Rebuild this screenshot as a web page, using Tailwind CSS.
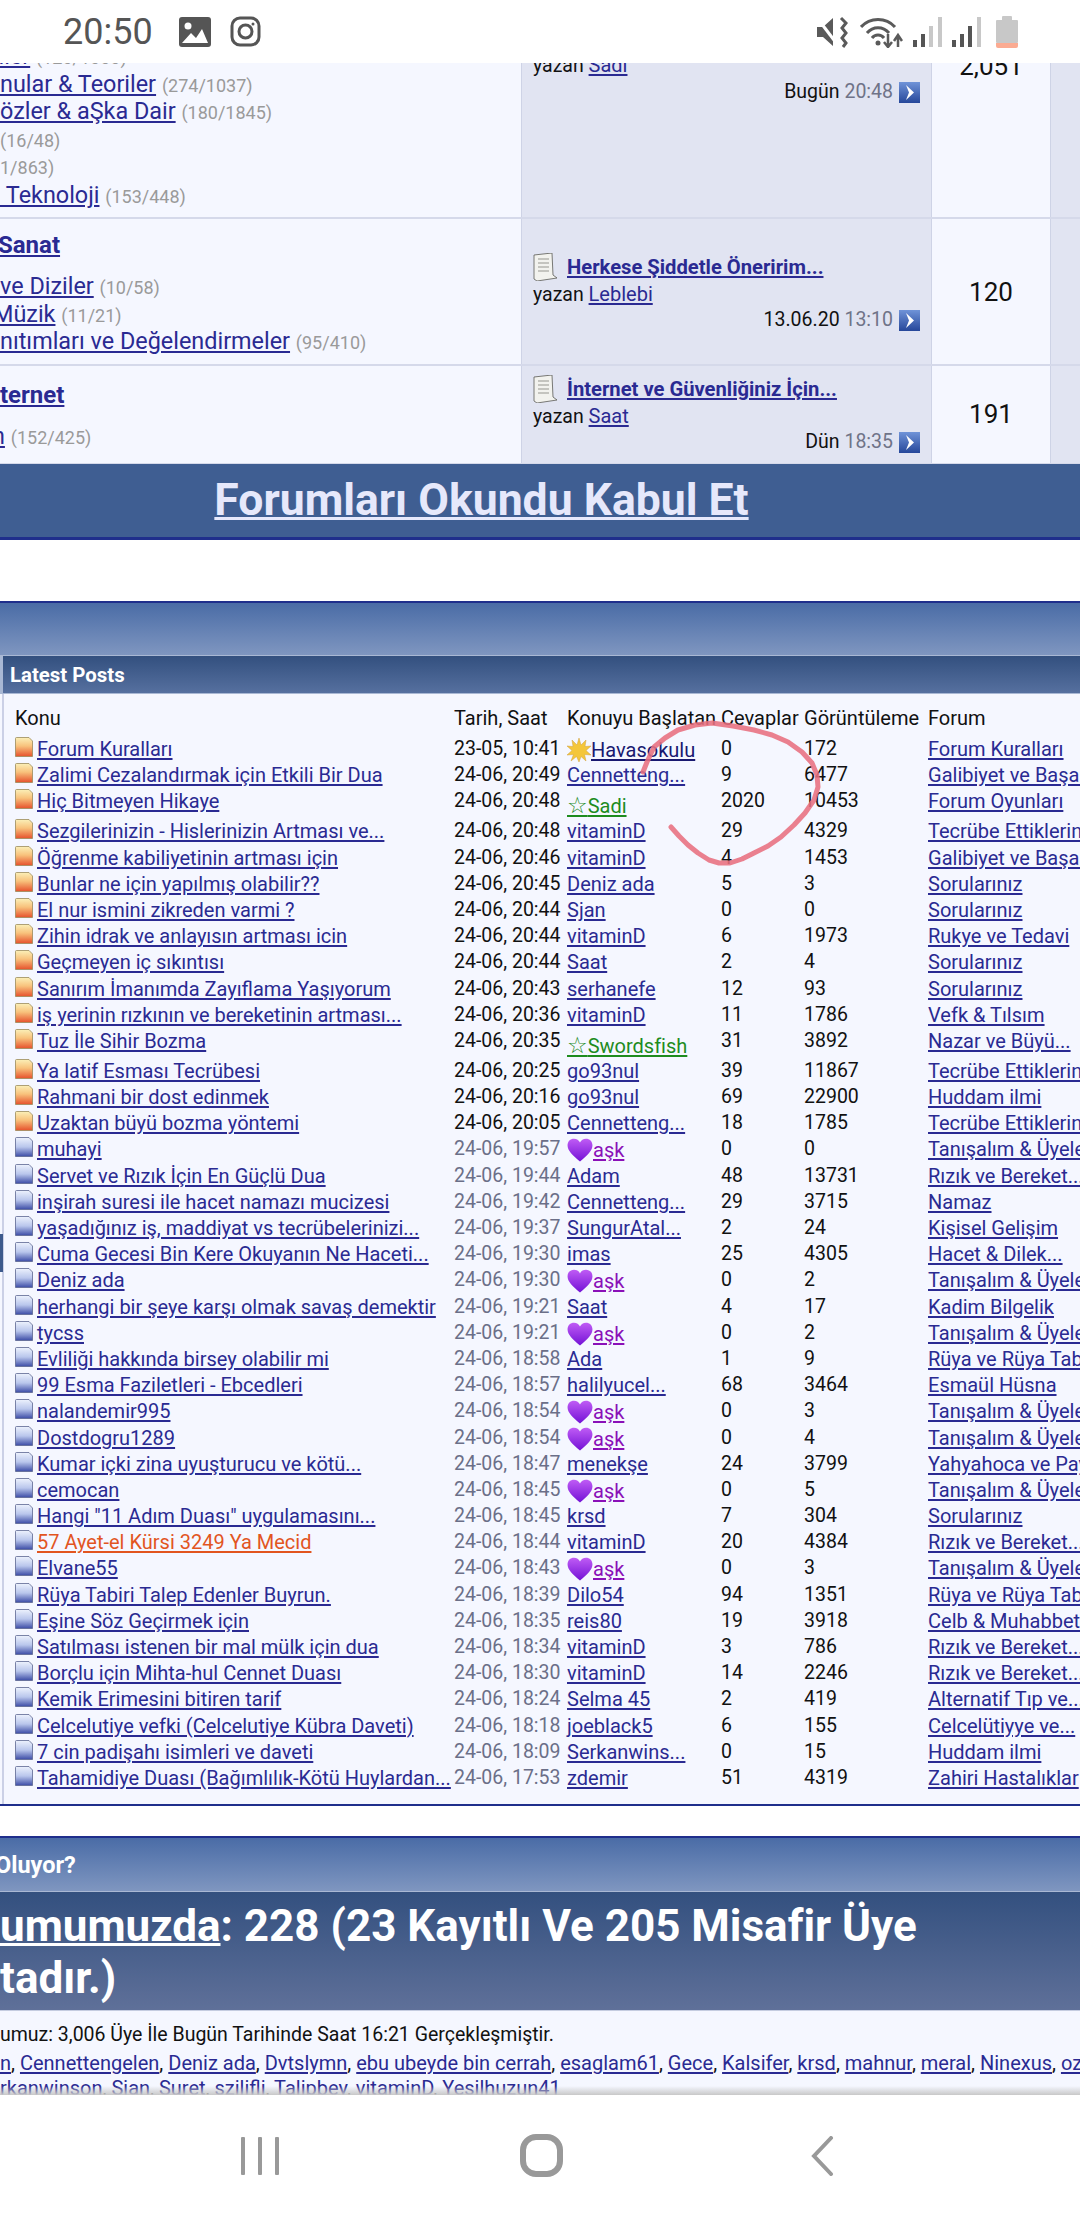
<!DOCTYPE html>
<html lang="tr">
<head>
<meta charset="utf-8">
<title>Forum</title>
<script src="https://cdn.jsdelivr.net/npm/@tailwindcss/browser@4"></script>
</head>
<body class="m-0 bg-white">
<svg class="absolute w-0 h-0" aria-hidden="true">
<defs>
<linearGradient id="go" x1="0" y1="0" x2="0" y2="1"><stop offset="0" stop-color="#fbf0b8"/><stop offset=".45" stop-color="#f8c27c"/><stop offset="1" stop-color="#e6512c"/></linearGradient>
<linearGradient id="gb" x1="0" y1="0" x2="0" y2="1"><stop offset="0" stop-color="#edf2fd"/><stop offset=".5" stop-color="#b9c6ec"/><stop offset="1" stop-color="#3c4ca6"/></linearGradient>
<linearGradient id="gh" x1="0" y1="0" x2="0" y2="1"><stop offset="0" stop-color="#c05cf5"/><stop offset="1" stop-color="#7412d6"/></linearGradient>
<linearGradient id="ga" x1="0" y1="0" x2="0" y2="1"><stop offset="0" stop-color="#6f93d8"/><stop offset="1" stop-color="#26479a"/></linearGradient>
<symbol id="fo" viewBox="0 0 18 20"><path d="M.5 1.5Q.5.5 1.5.5H14L17.5 4V19.5H.5Z" fill="url(#go)" stroke="#9a8a5a" stroke-width=".8"/></symbol>
<symbol id="fb" viewBox="0 0 18 20"><path d="M.5 1.5Q.5.5 1.5.5H14L17.5 4V19.5H.5Z" fill="url(#gb)" stroke="#5c6690" stroke-width=".8"/></symbol>
<symbol id="he" viewBox="0 0 24 22"><path d="M12 21.5C5 15.500 .5 11.500 .5 6.500 .5 3 3 .5 6.500 .5 9 .5 11 1.800 12 4 13 1.800 15 .5 17.500 .5 21 .5 23.500 3 23.500 6.500 23.500 11.500 19 15.500 12 21.500Z" fill="url(#gh)"/></symbol>
<symbol id="st" viewBox="0 0 24 24"><path d="M12 0 14 7 19 2 18 8.500 24 8 19 12.500 24 17 17.500 16.500 19 23 14 18.500 12 24 9.500 18.500 4 23 6.500 16.500 0 17 5 12.500 0 8 6 8.500 5 2 10 7Z" fill="#f4c63a" stroke="#d0a040" stroke-width=".5"/></symbol>
<symbol id="ar" viewBox="0 0 21 21"><rect width="21" height="21" fill="url(#ga)"/><path d="M7 3 15 10.500 7 18 10 10.500Z" fill="#fff"/></symbol>
<symbol id="dc" viewBox="0 0 25 28"><path d="M1 2 19 0 20 22 24 25 4 28 1 26Z" fill="#f2f2ee" stroke="#5a5a55" stroke-width=".8"/><path d="M5 6H16M5 10H16M5 14H16M5 18H16" stroke="#b5b5b0" stroke-width="1.500"/></symbol>
</defs>
</svg>

<div class="relative w-[1080px] h-[2220px] overflow-hidden flex flex-col bg-white font-[Roboto,sans-serif] text-[19.5px] text-[#111]">

<!-- Status bar -->
<div class="h-[63px] shrink-0 bg-white flex items-center pl-[63px] pr-[62px] text-[#555] relative z-10">
  <span class="text-[36px] leading-none">20:50</span>
  <svg class="ml-[26px] w-[32px] h-[30px]" viewBox="0 0 32 30"><rect width="32" height="30" rx="3" fill="#555"/><circle cx="9" cy="9" r="3.500" fill="#fff"/><path d="M3 26 12 16 17 21 23 12 29 26Z" fill="#fff"/></svg>
  <svg class="ml-[19px] w-[31px] h-[31px]" viewBox="0 0 31 31" fill="none" stroke="#555" stroke-width="3"><rect x="2" y="2" width="27" height="27" rx="8"/><circle cx="15.500" cy="15.500" r="6.500"/><circle cx="23" cy="8" r="1.500" fill="#555" stroke="none"/></svg>
  <div class="ml-auto flex items-center">
    <svg class="w-[31px] h-[32px]" viewBox="0 0 31 32"><path d="M0 11H6L16 2V30L6 21H0Z" fill="#5a5a5a"/><path d="M1 3 20 28" stroke="#fff" stroke-width="3"/><path d="M24 2 29 7 25 12 29 17 25 22 29 27 26 31" fill="none" stroke="#5a5a5a" stroke-width="3"/></svg>
    <svg class="ml-[12px] w-[43px] h-[32px]" viewBox="0 0 43 32" fill="none" stroke="#5a5a5a" stroke-width="3"><path d="M1 11C10 1 26 1 35 11"/><path d="M7 17C13 10 23 10 29 17"/><path d="M12 22C15 18 21 18 24 22"/><circle cx="18" cy="27" r="2.500" fill="#5a5a5a" stroke="none"/><path d="M28 18V30M24 26 28 31 32 26M38 31V20M34 25 38 19 42 25" stroke-width="2.500"/></svg>
    <svg class="ml-[10px] w-[29px] h-[32px]" viewBox="0 0 29 32"><rect x="0" y="24" width="4" height="7" fill="#555"/><rect x="8" y="18" width="4" height="13" fill="#555"/><rect x="16" y="10" width="4" height="21" fill="#c8c8c8"/><rect x="25" y="1" width="4" height="30" fill="#c8c8c8"/></svg>
    <svg class="ml-[10px] w-[29px] h-[32px]" viewBox="0 0 29 32"><rect x="0" y="24" width="4" height="7" fill="#555"/><rect x="8" y="18" width="4" height="13" fill="#555"/><rect x="16" y="10" width="4" height="21" fill="#555"/><rect x="25" y="1" width="4" height="30" fill="#c8c8c8"/></svg>
    <svg class="ml-[15px] w-[22px] h-[32px]" viewBox="0 0 22 32"><rect x="6" y="0" width="10" height="5" rx="1" fill="#c8c8c8"/><rect x="0" y="4" width="22" height="23" rx="1" fill="#c8c8c8"/><path d="M0 27H22V30Q22 32 20 32H2Q0 32 0 30Z" fill="#fbab92"/></svg>
  </div>
</div>

<!-- Page viewport -->
<div class="h-[2033px] shrink-0 overflow-hidden relative [&_a]:underline [&_a]:underline-offset-2 [&_a]:text-[#2a2a92]">

  <!-- Forum rows -->
  <div class="h-[156px] grid grid-cols-[521px_411px_118px_1fr] border-b-2 border-[#d5d9ea] bg-[#f5f7ff] overflow-hidden">
    <div class="text-[23.4px] leading-[27.5px] whitespace-nowrap -mt-[20px] [&_span]:leading-none [&_a]:leading-none">
      <div class="-ml-[48px]"><a href="#">Teoriler</a> <span class="text-[18px] text-[#9a9a9a]">(120/1000)</span></div>
      <div><a href="#">nular &amp; Teoriler</a> <span class="text-[18px] text-[#9a9a9a]">(274/1037)</span></div>
      <div><a href="#">özler &amp; aŞka Dair</a> <span class="text-[18px] text-[#9a9a9a]">(180/1845)</span></div>
      <div class="pt-[1px] text-[18px] text-[#9a9a9a]">(16/48)</div>
      <div class="text-[18px] text-[#9a9a9a]">1/863)</div>
      <div><a href="#">&nbsp;Teknoloji</a> <span class="text-[18px] text-[#9a9a9a]">(153/448)</span></div>
    </div>
    <div class="bg-[#e1e4f2] border-x border-[#ced3e6] pl-[11px] pr-[11px] -mt-[11px] leading-[26px]">
      <div>yazan <a href="#" class="text-[20px]">Sadi</a></div>
      <div class="flex justify-end items-center"><span>Bugün</span>&nbsp;<span class="text-[#6f7388]">20:48</span><svg class="ml-[6px] w-[21px] h-[21px]"><use href="#ar"/></svg></div>
    </div>
    <div class="text-center text-[26px] leading-[30px] -mt-[12px]">2,051</div>
    <div class="bg-[#e1e4f2] border-l border-[#ced3e6] text-[26px] leading-[30px] pl-[24px] -mt-[12px]">1</div>
  </div>

  <div class="h-[147px] grid grid-cols-[521px_411px_118px_1fr] border-b-2 border-[#d5d9ea] bg-[#f5f7ff]">
    <div class="whitespace-nowrap pt-[13px] text-[23.4px] leading-[27.5px] [&_span]:leading-none [&_a]:leading-none">
      <div class="-ml-[2px] h-[41px]"><a href="#" class="text-[24px] font-bold">Sanat</a></div>
      <div><a href="#">ve Diziler</a> <span class="text-[18px] text-[#9a9a9a]">(10/58)</span></div>
      <div class="-ml-[7px]"><a href="#">Müzik</a> <span class="text-[18px] text-[#9a9a9a]">(11/21)</span></div>
      <div><a href="#">nıtımları ve Değelendirmeler</a> <span class="text-[18px] text-[#9a9a9a]">(95/410)</span></div>
    </div>
    <div class="bg-[#e1e4f2] border-x border-[#ced3e6] pl-[11px] pr-[11px] pt-[34px] leading-[26px]">
      <div class="flex items-center h-[28px]"><svg class="w-[25px] h-[28px] mr-[9px]"><use href="#dc"/></svg><a href="#" class="font-bold text-[20.2px]">Herkese Şiddetle Öneririm...</a></div>
      <div>yazan <a href="#" class="text-[20px]">Leblebi</a></div>
      <div class="flex justify-end items-center -mt-[1px]"><span>13.06.20</span>&nbsp;<span class="text-[#6f7388]">13:10</span><svg class="ml-[6px] w-[21px] h-[21px]"><use href="#ar"/></svg></div>
    </div>
    <div class="flex items-center justify-center text-[26px] pt-[1px]">120</div>
    <div class="bg-[#e1e4f2] border-l border-[#ced3e6]"></div>
  </div>

  <div class="h-[97px] grid grid-cols-[521px_411px_118px_1fr] bg-[#f5f7ff]">
    <div class="whitespace-nowrap pt-[16px] text-[23.4px] leading-[27.5px] [&_span]:leading-none [&_a]:leading-none">
      <div class="h-[41px]"><a href="#" class="text-[24px] font-bold">ternet</a></div>
      <div class="-ml-[8px]"><a href="#">n</a> <span class="text-[18px] text-[#9a9a9a]">(152/425)</span></div>
    </div>
    <div class="bg-[#e1e4f2] border-x border-[#ced3e6] pl-[11px] pr-[11px] pt-[9px] leading-[26px]">
      <div class="flex items-center h-[28px]"><svg class="w-[25px] h-[28px] mr-[9px]"><use href="#dc"/></svg><a href="#" class="font-bold text-[20.2px]">İnternet ve Güvenliğiniz İçin...</a></div>
      <div>yazan <a href="#" class="text-[20px]">Saat</a></div>
      <div class="flex justify-end items-center -mt-[1px]"><span>Dün</span>&nbsp;<span class="text-[#6f7388]">18:35</span><svg class="ml-[6px] w-[21px] h-[21px]"><use href="#ar"/></svg></div>
    </div>
    <div class="flex items-center justify-center text-[26px]">191</div>
    <div class="bg-[#e1e4f2] border-l border-[#ced3e6]"></div>
  </div>

  <!-- Blue banner -->
  <div class="h-[77px] bg-[#3f5e92] border-t border-[#d5d9ea] border-b-[3px] border-b-[#1f2f8c] flex justify-center items-start pt-[7px] pr-[117px] whitespace-nowrap">
    <a href="#" class="text-[44.5px] leading-[58px] font-bold !text-[#e6e8fb] decoration-[3px]">Forumları Okundu Kabul Et</a>
  </div>

  <div class="h-[61px] bg-white"></div>

  <!-- Latest posts -->
  <div class="h-[55px] border-t-[2px] border-[#1f2f8c] bg-linear-to-b from-[#4a6ca6] to-[#7f96c0] border-b border-b-[#a9b8d4]"></div>
  <div class="h-[38px] bg-linear-to-b from-[#33507f] to-[#56709f] border-l-[3px] border-[#a9b8d4] border-b border-b-[#a9b8d4] pl-[7px] pt-[2px] flex items-center font-bold text-white text-[20.4px]">Latest Posts</div>
  <div class="relative bg-[#f5f7ff] h-[1112px] border-b-[2px] border-[#1f2f8c] overflow-hidden pl-[15px] pt-[10px]">
    <div class="absolute left-[2px] top-0 bottom-0 w-[2px] bg-[#cbd0e6]"></div>
    <div class="absolute left-0 top-[540px] h-[38px] w-[3px] bg-[#3d5a8c]"></div>
    <table class="table-fixed w-[1113px] border-collapse [&_td]:px-0 [&_td]:pb-0 [&_td]:pt-[2px] [&_td]:align-top [&_td]:whitespace-nowrap [&_td]:leading-[22px] [&_td>svg]:block [&_td>svg]:w-[18px] [&_td>svg]:h-[20px] [&_td>svg]:mt-[-1px] [&_a>svg]:inline-block [&_a>svg]:align-[-5px] [&_a]:text-[20px]">
      <colgroup><col class="w-[22px]"><col class="w-[417px]"><col class="w-[113px]"><col class="w-[154px]"><col class="w-[83px]"><col class="w-[124px]"><col class="w-[200px]"></colgroup>
      <tbody>
      <tr class="h-[32px] text-[20px] [&>td]:!pt-[3px]"><td colspan="2">Konu</td><td>Tarih, Saat</td><td>Konuyu Başlatan</td><td>Cevaplar</td><td>Görüntüleme</td><td>Forum</td></tr>
      <tr class="h-[26.2px]"><td><svg><use href="#fo"/></svg></td><td><a href="#">Forum Kuralları</a></td><td>23-05, 10:41</td><td><a href="#" class="!text-[#191970]"><svg class="w-[24px] h-[24px]"><use href="#st"/></svg>Havasokulu</a></td><td>0</td><td>172</td><td><a href="#">Forum Kuralları</a></td></tr>
      <tr class="h-[26.2px]"><td><svg><use href="#fo"/></svg></td><td><a href="#">Zalimi Cezalandırmak için Etkili Bir Dua</a></td><td>24-06, 20:49</td><td><a href="#">Cennetteng...</a></td><td>9</td><td>6477</td><td><a href="#">Galibiyet ve Başarı</a></td></tr>
      <tr class="h-[30px]"><td><svg><use href="#fo"/></svg></td><td><a href="#">Hiç Bitmeyen Hikaye</a></td><td>24-06, 20:48</td><td class="!pt-[6px]"><a href="#" class="!text-[#1e8c1e]"><span class="font-['DejaVu_Sans'] text-[23px] leading-none">☆</span>Sadi</a></td><td>2020</td><td>10453</td><td><a href="#">Forum Oyunları</a></td></tr>
      <tr class="h-[26.2px]"><td><svg><use href="#fo"/></svg></td><td><a href="#">Sezgilerinizin - Hislerinizin Artması ve...</a></td><td>24-06, 20:48</td><td><a href="#">vitaminD</a></td><td>29</td><td>4329</td><td><a href="#">Tecrübe Ettiklerin</a></td></tr>
      <tr class="h-[26.2px]"><td><svg><use href="#fo"/></svg></td><td><a href="#">Öğrenme kabiliyetinin artması için</a></td><td>24-06, 20:46</td><td><a href="#">vitaminD</a></td><td>4</td><td>1453</td><td><a href="#">Galibiyet ve Başarı</a></td></tr>
      <tr class="h-[26.2px]"><td><svg><use href="#fo"/></svg></td><td><a href="#">Bunlar ne için yapılmış olabilir??</a></td><td>24-06, 20:45</td><td><a href="#">Deniz ada</a></td><td>5</td><td>3</td><td><a href="#">Sorularınız</a></td></tr>
      <tr class="h-[26.2px]"><td><svg><use href="#fo"/></svg></td><td><a href="#">El nur ismini zikreden varmi ?</a></td><td>24-06, 20:44</td><td><a href="#">Sjan</a></td><td>0</td><td>0</td><td><a href="#">Sorularınız</a></td></tr>
      <tr class="h-[26.2px]"><td><svg><use href="#fo"/></svg></td><td><a href="#">Zihin idrak ve anlayısın artması icin</a></td><td>24-06, 20:44</td><td><a href="#">vitaminD</a></td><td>6</td><td>1973</td><td><a href="#">Rukye ve Tedavi</a></td></tr>
      <tr class="h-[26.2px]"><td><svg><use href="#fo"/></svg></td><td><a href="#">Geçmeyen iç sıkıntısı</a></td><td>24-06, 20:44</td><td><a href="#">Saat</a></td><td>2</td><td>4</td><td><a href="#">Sorularınız</a></td></tr>
      <tr class="h-[26.2px]"><td><svg><use href="#fo"/></svg></td><td><a href="#">Sanırım İmanımda Zayıflama Yaşıyorum</a></td><td>24-06, 20:43</td><td><a href="#">serhanefe</a></td><td>12</td><td>93</td><td><a href="#">Sorularınız</a></td></tr>
      <tr class="h-[26.2px]"><td><svg><use href="#fo"/></svg></td><td><a href="#">iş yerinin rızkının ve bereketinin artması...</a></td><td>24-06, 20:36</td><td><a href="#">vitaminD</a></td><td>11</td><td>1786</td><td><a href="#">Vefk &amp; Tılsım</a></td></tr>
      <tr class="h-[30px]"><td><svg><use href="#fo"/></svg></td><td><a href="#">Tuz İle Sihir Bozma</a></td><td>24-06, 20:35</td><td class="!pt-[6px]"><a href="#" class="!text-[#1e8c1e]"><span class="font-['DejaVu_Sans'] text-[23px] leading-none">☆</span>Swordsfish</a></td><td>31</td><td>3892</td><td><a href="#">Nazar ve Büyü...</a></td></tr>
      <tr class="h-[26.2px]"><td><svg><use href="#fo"/></svg></td><td><a href="#">Ya latif Esması Tecrübesi</a></td><td>24-06, 20:25</td><td><a href="#">go93nul</a></td><td>39</td><td>11867</td><td><a href="#">Tecrübe Ettiklerin</a></td></tr>
      <tr class="h-[26.2px]"><td><svg><use href="#fo"/></svg></td><td><a href="#">Rahmani bir dost edinmek</a></td><td>24-06, 20:16</td><td><a href="#">go93nul</a></td><td>69</td><td>22900</td><td><a href="#">Huddam ilmi</a></td></tr>
      <tr class="h-[26.2px]"><td><svg><use href="#fo"/></svg></td><td><a href="#">Uzaktan büyü bozma yöntemi</a></td><td>24-06, 20:05</td><td><a href="#">Cennetteng...</a></td><td>18</td><td>1785</td><td><a href="#">Tecrübe Ettiklerin</a></td></tr>
      <tr class="h-[26.2px]"><td><svg><use href="#fb"/></svg></td><td><a href="#">muhayi</a></td><td class="text-[#6b6f88]">24-06, 19:57</td><td><a href="#" class="!text-[#8a10b8]"><svg class="w-[26px] h-[24px]"><use href="#he"/></svg>aşk</a></td><td>0</td><td>0</td><td><a href="#">Tanışalım &amp; Üyeler</a></td></tr>
      <tr class="h-[26.2px]"><td><svg><use href="#fb"/></svg></td><td><a href="#">Servet ve Rızık İçin En Güçlü Dua</a></td><td class="text-[#6b6f88]">24-06, 19:44</td><td><a href="#">Adam</a></td><td>48</td><td>13731</td><td><a href="#">Rızık ve Bereket...</a></td></tr>
      <tr class="h-[26.2px]"><td><svg><use href="#fb"/></svg></td><td><a href="#">inşirah suresi ile hacet namazı mucizesi</a></td><td class="text-[#6b6f88]">24-06, 19:42</td><td><a href="#">Cennetteng...</a></td><td>29</td><td>3715</td><td><a href="#">Namaz</a></td></tr>
      <tr class="h-[26.2px]"><td><svg><use href="#fb"/></svg></td><td><a href="#">yaşadığınız iş, maddiyat vs tecrübelerinizi...</a></td><td class="text-[#6b6f88]">24-06, 19:37</td><td><a href="#">SungurAtal...</a></td><td>2</td><td>24</td><td><a href="#">Kişisel Gelişim</a></td></tr>
      <tr class="h-[26.2px]"><td><svg><use href="#fb"/></svg></td><td><a href="#">Cuma Gecesi Bin Kere Okuyanın Ne Haceti...</a></td><td class="text-[#6b6f88]">24-06, 19:30</td><td><a href="#">imas</a></td><td>25</td><td>4305</td><td><a href="#">Hacet &amp; Dilek...</a></td></tr>
      <tr class="h-[26.2px]"><td><svg><use href="#fb"/></svg></td><td><a href="#">Deniz ada</a></td><td class="text-[#6b6f88]">24-06, 19:30</td><td><a href="#" class="!text-[#8a10b8]"><svg class="w-[26px] h-[24px]"><use href="#he"/></svg>aşk</a></td><td>0</td><td>2</td><td><a href="#">Tanışalım &amp; Üyeler</a></td></tr>
      <tr class="h-[26.2px]"><td><svg><use href="#fb"/></svg></td><td><a href="#">herhangi bir şeye karşı olmak savaş demektir</a></td><td class="text-[#6b6f88]">24-06, 19:21</td><td><a href="#">Saat</a></td><td>4</td><td>17</td><td><a href="#">Kadim Bilgelik</a></td></tr>
      <tr class="h-[26.2px]"><td><svg><use href="#fb"/></svg></td><td><a href="#">tycss</a></td><td class="text-[#6b6f88]">24-06, 19:21</td><td><a href="#" class="!text-[#8a10b8]"><svg class="w-[26px] h-[24px]"><use href="#he"/></svg>aşk</a></td><td>0</td><td>2</td><td><a href="#">Tanışalım &amp; Üyeler</a></td></tr>
      <tr class="h-[26.2px]"><td><svg><use href="#fb"/></svg></td><td><a href="#">Evliliği hakkında birsey olabilir mi</a></td><td class="text-[#6b6f88]">24-06, 18:58</td><td><a href="#">Ada</a></td><td>1</td><td>9</td><td><a href="#">Rüya ve Rüya Tabiri</a></td></tr>
      <tr class="h-[26.2px]"><td><svg><use href="#fb"/></svg></td><td><a href="#">99 Esma Faziletleri - Ebcedleri</a></td><td class="text-[#6b6f88]">24-06, 18:57</td><td><a href="#">halilyucel...</a></td><td>68</td><td>3464</td><td><a href="#">Esmaül Hüsna</a></td></tr>
      <tr class="h-[26.2px]"><td><svg><use href="#fb"/></svg></td><td><a href="#">nalandemir995</a></td><td class="text-[#6b6f88]">24-06, 18:54</td><td><a href="#" class="!text-[#8a10b8]"><svg class="w-[26px] h-[24px]"><use href="#he"/></svg>aşk</a></td><td>0</td><td>3</td><td><a href="#">Tanışalım &amp; Üyeler</a></td></tr>
      <tr class="h-[26.2px]"><td><svg><use href="#fb"/></svg></td><td><a href="#">Dostdogru1289</a></td><td class="text-[#6b6f88]">24-06, 18:54</td><td><a href="#" class="!text-[#8a10b8]"><svg class="w-[26px] h-[24px]"><use href="#he"/></svg>aşk</a></td><td>0</td><td>4</td><td><a href="#">Tanışalım &amp; Üyeler</a></td></tr>
      <tr class="h-[26.2px]"><td><svg><use href="#fb"/></svg></td><td><a href="#">Kumar içki zina uyuşturucu ve kötü...</a></td><td class="text-[#6b6f88]">24-06, 18:47</td><td><a href="#">menekşe</a></td><td>24</td><td>3799</td><td><a href="#">Yahyahoca ve Paylaşım</a></td></tr>
      <tr class="h-[26.2px]"><td><svg><use href="#fb"/></svg></td><td><a href="#">cemocan</a></td><td class="text-[#6b6f88]">24-06, 18:45</td><td><a href="#" class="!text-[#8a10b8]"><svg class="w-[26px] h-[24px]"><use href="#he"/></svg>aşk</a></td><td>0</td><td>5</td><td><a href="#">Tanışalım &amp; Üyeler</a></td></tr>
      <tr class="h-[26.2px]"><td><svg><use href="#fb"/></svg></td><td><a href="#">Hangi "11 Adım Duası" uygulamasını...</a></td><td class="text-[#6b6f88]">24-06, 18:45</td><td><a href="#">krsd</a></td><td>7</td><td>304</td><td><a href="#">Sorularınız</a></td></tr>
      <tr class="h-[26.2px]"><td><svg><use href="#fb"/></svg></td><td><a href="#" class="!text-[#e2551f]">57 Ayet-el Kürsi 3249 Ya Mecid</a></td><td class="text-[#6b6f88]">24-06, 18:44</td><td><a href="#">vitaminD</a></td><td>20</td><td>4384</td><td><a href="#">Rızık ve Bereket...</a></td></tr>
      <tr class="h-[26.2px]"><td><svg><use href="#fb"/></svg></td><td><a href="#">Elvane55</a></td><td class="text-[#6b6f88]">24-06, 18:43</td><td><a href="#" class="!text-[#8a10b8]"><svg class="w-[26px] h-[24px]"><use href="#he"/></svg>aşk</a></td><td>0</td><td>3</td><td><a href="#">Tanışalım &amp; Üyeler</a></td></tr>
      <tr class="h-[26.2px]"><td><svg><use href="#fb"/></svg></td><td><a href="#">Rüya Tabiri Talep Edenler Buyrun.</a></td><td class="text-[#6b6f88]">24-06, 18:39</td><td><a href="#">Dilo54</a></td><td>94</td><td>1351</td><td><a href="#">Rüya ve Rüya Tabiri</a></td></tr>
      <tr class="h-[26.2px]"><td><svg><use href="#fb"/></svg></td><td><a href="#">Eşine Söz Geçirmek için</a></td><td class="text-[#6b6f88]">24-06, 18:35</td><td><a href="#">reis80</a></td><td>19</td><td>3918</td><td><a href="#">Celb &amp; Muhabbet</a></td></tr>
      <tr class="h-[26.2px]"><td><svg><use href="#fb"/></svg></td><td><a href="#">Satılması istenen bir mal mülk için dua</a></td><td class="text-[#6b6f88]">24-06, 18:34</td><td><a href="#">vitaminD</a></td><td>3</td><td>786</td><td><a href="#">Rızık ve Bereket...</a></td></tr>
      <tr class="h-[26.2px]"><td><svg><use href="#fb"/></svg></td><td><a href="#">Borçlu için Mihta-hul Cennet Duası</a></td><td class="text-[#6b6f88]">24-06, 18:30</td><td><a href="#">vitaminD</a></td><td>14</td><td>2246</td><td><a href="#">Rızık ve Bereket...</a></td></tr>
      <tr class="h-[26.2px]"><td><svg><use href="#fb"/></svg></td><td><a href="#">Kemik Erimesini bitiren tarif</a></td><td class="text-[#6b6f88]">24-06, 18:24</td><td><a href="#">Selma 45</a></td><td>2</td><td>419</td><td><a href="#">Alternatif Tıp ve...</a></td></tr>
      <tr class="h-[26.2px]"><td><svg><use href="#fb"/></svg></td><td><a href="#">Celcelutiye vefki (Celcelutiye Kübra Daveti)</a></td><td class="text-[#6b6f88]">24-06, 18:18</td><td><a href="#">joeblack5</a></td><td>6</td><td>155</td><td><a href="#">Celcelütiyye ve...</a></td></tr>
      <tr class="h-[26.2px]"><td><svg><use href="#fb"/></svg></td><td><a href="#">7 cin padişahı isimleri ve daveti</a></td><td class="text-[#6b6f88]">24-06, 18:09</td><td><a href="#">Serkanwins...</a></td><td>0</td><td>15</td><td><a href="#">Huddam ilmi</a></td></tr>
      <tr class="h-[26.2px]"><td><svg><use href="#fb"/></svg></td><td><a href="#">Tahamidiye Duası (Bağımlılık-Kötü Huylardan...</a></td><td class="text-[#6b6f88]">24-06, 17:53</td><td><a href="#">zdemir</a></td><td>51</td><td>4319</td><td><a href="#">Zahiri Hastalıklar</a></td></tr>
      </tbody>
    </table>
  </div>

  <div class="h-[30px] bg-white"></div>

  <!-- Who's online -->
  <div class="h-[56px] border-t-[2px] border-[#1f2f8c] bg-linear-to-b from-[#4a6ca6] to-[#7f96c0] border-b border-b-[#a9b8d4] flex items-center pt-[3px] -ml-[5px] font-bold text-white text-[23.5px] whitespace-nowrap">Oluyor?</div>
  <div class="h-[119px] bg-linear-to-b from-[#33507f] to-[#5f7099] border-b border-b-[#c5cce0] pt-[8px] font-bold text-white text-[44px] leading-[52px] whitespace-nowrap">
    <div><a href="#" class="!text-white decoration-[3px]">umumuzda</a>: 228 (23 Kayıtlı Ve 205 Misafir Üye</div>
    <div>tadır.)</div>
  </div>
  <div class="relative h-[84px] bg-[#f5f7ff] overflow-hidden whitespace-nowrap pt-[10px] leading-[28px] text-[20px]">
    <div class="text-[19.5px]">umuz: 3,006 Üye İle Bugün Tarihinde Saat 16:21 Gerçekleşmiştir.</div>
    <div><a href="#">n</a>, <a href="#">Cennettengelen</a>, <a href="#">Deniz ada</a>, <a href="#">Dvtslymn</a>, <a href="#">ebu ubeyde bin cerrah</a>, <a href="#">esaglam61</a>, <a href="#">Gece</a>, <a href="#">Kalsifer</a>, <a href="#">krsd</a>, <a href="#">mahnur</a>, <a href="#">meral</a>, <a href="#">Ninexus</a>, <a href="#">ozb</a></div>
    <div class="-mt-[3px]"><a href="#">rkanwinson</a>, <a href="#">Sjan</a>, <a href="#">Suret</a>, <a href="#">szilifli</a>, <a href="#">Talipbey</a>, <a href="#">vitaminD</a>, <a href="#">Yesilhuzun41</a></div>
    <div class="absolute left-0 right-0 bottom-0 h-[9px] bg-linear-to-b from-[#f5f7ff]/0 to-[#c8c8c8]"></div>
  </div>
</div>

<!-- Nav bar -->
<div class="flex-1 bg-white relative">
  <svg class="absolute left-[240px] top-[40px] w-[40px] h-[40px]" viewBox="0 0 40 40" fill="#999"><rect x="1" y="1" width="4" height="38" rx="1"/><rect x="18" y="1" width="4" height="38" rx="1"/><rect x="35" y="1" width="4" height="38" rx="1"/></svg>
  <svg class="absolute left-[520px] top-[38px] w-[43px] h-[43px]" viewBox="0 0 43 43" fill="none" stroke="#999" stroke-width="6"><rect x="3" y="3" width="37" height="37" rx="13"/></svg>
  <svg class="absolute left-[811px] top-[40px] w-[23px] h-[40px]" viewBox="0 0 23 40" fill="none" stroke="#999" stroke-width="4" stroke-linecap="round"><path d="M20 2 3 20 20 38"/></svg>
</div>

<!-- Hand-drawn red circle over the screenshot -->
<svg class="absolute left-0 top-0 w-[1080px] h-[2220px] pointer-events-none" viewBox="0 0 1080 2220" fill="none"><path d="M643 772 647 762 654 747 665 738 678 730 695 725 712 723 733 726 754 730 772 735 788 742 802 752 812 763 817 775 818 787 814 800 805 813 794 825 781 837 768 846 754 853 742 859 730 863 719 863 709 860 698 853 688 845 679 836 671 827" stroke="#e8707f" stroke-opacity=".88" stroke-width="5" stroke-linecap="round" stroke-linejoin="round"/></svg>

</div>
</body>
</html>
